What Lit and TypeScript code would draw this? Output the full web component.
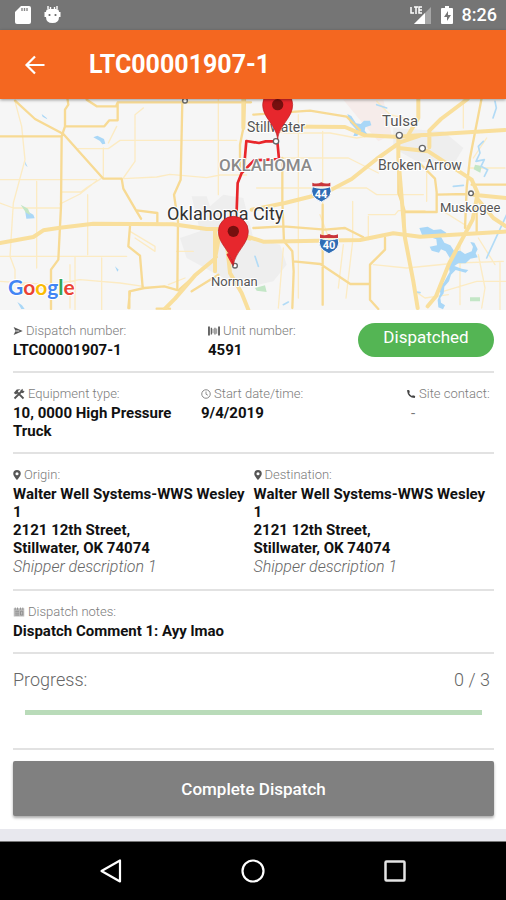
import { LitElement, html, css, svg } from "lit";
import { customElement, property } from "lit/decorators.js";

const ICONS = {
  send: svg`<path d="M1 1.500 15.500 8 1 14.500 4 8Z" fill="#555"/><path d="M4 8h6" stroke="#fff" stroke-width="1.400"/>`,
  barcode: svg`<path d="M0 2h2.600v12H0zM3.600 3.500h1.800v9H3.600zM6.200 5h1v6h-1zM8.500 3.500h1.600v9H8.500zM11.200 4.500h1v7h-1zM13.400 2H16v12h-2.600z" fill="#666"/>`,
  tools: svg`<path d="M2 14 12 4M14 14 5.500 5.500" stroke="#555" stroke-width="2.400"/><path d="M1 6.500 5 2l5-.5L6.500 4 7 6 4 8.500ZM10 3l3-2v2.500L15.500 4 13.500 7 10.500 6Z" fill="#555"/>`,
  clock: svg`<circle cx="8" cy="8" r="6.800" fill="none" stroke="#777" stroke-width="1.400"/><path d="M8 4v4.300l3 1.700" fill="none" stroke="#777" stroke-width="1.300"/>`,
  phone: svg`<path d="M1.500 2 5 1.500 6.200 5 4.800 6.500q1.600 3 4.700 4.700L11 9.800l3.700 1.300-.6 3.400Q3 14.500 1.500 2Z" fill="#444"/>`,
  pin: svg`<path fill-rule="evenodd" d="M8 0a6 6 0 0 0-6 6C2 10 8 16 8 16S14 10 14 6A6 6 0 0 0 8 0Zm0 3.500a2.500 2.500 0 1 1 0 5 2.500 2.500 0 0 1 0-5Z" fill="#555"/>`,
  notes: svg`<path d="M1 3h14v11H1Z" fill="#bbb"/><path d="M3 2v3M6 2v3M10 2v3M13 2v3M3 7h5M3 9.500h5M3 12h5M10 7v5h3V7Z" fill="none" stroke="#888" stroke-width="1.100"/>`,
};
type IconName = keyof typeof ICONS;

@customElement("detail-field")
class DetailField extends LitElement {
  @property() icon: IconName = "send";
  @property() label = "";

  static styles = css`
    :host { display: block; min-width: 0; }
    dl, dd { margin: 0; }
    dt { display: flex; align-items: center; gap: 3px; font-size: 13px; line-height: 20px; color: #7c7c7c; font-weight: 300; white-space: nowrap; }
    dd { font-size: 15px; line-height: 18px; font-weight: 700; color: #111; }
    svg { width: 10px; height: 10px; flex: none; }
    .tools, .notes, .barcode { width: 12px; height: 12px; }
    .pin { width: 8px; }
  `;

  render() {
    return html`<dl>
      <dt><svg class=${this.icon} viewBox=${this.icon === "pin" ? "2 0 12 16" : "0 0 16 16"} aria-hidden="true">${ICONS[this.icon]}</svg>${this.label}</dt>
      <dd><slot></slot></dd>
    </dl>`;
  }
}

@customElement("route-map")
class RouteMap extends LitElement {
  static styles = css`
    :host { display: block; height: 211px; background: #f6f6f6; overflow: hidden; }
    svg { display: block; width: 100%; height: 100%; font-family: Roboto, sans-serif; }
    path { fill: none; stroke-linejoin: round; stroke-linecap: round; }
    .minor { stroke: #fcebc3; stroke-width: 4; }
    .road { stroke: #f7da94; stroke-width: 7; }
    .major { stroke: #f9df9c; stroke-width: 12; }
    .urban { fill: #eeeeee; }
    .park { fill: #f6ecea; }
    .water { fill: #a9d7f7; }
    .river { stroke: #b2dbf6; stroke-width: 5; }
    .green { fill: #c3e6c6; }
    .route { stroke: #e8262a; stroke-width: 8; }
    .town { fill: #fff; stroke: #666; stroke-width: 4; }
    .label { fill: #555; stroke: #fff; stroke-width: 2; paint-order: stroke; }
    .small { font-size: 13px; }
    .medium { font-size: 14px; }
    .city { font-size: 15px; }
    .large { font-size: 18px; fill: #333; }
    .state { font-size: 17px; fill: #8a8a8a; font-weight: 500; }
    .pin { fill: #e7272d; stroke: #b71c20; stroke-width: 2; }
    .dot { fill: #76100f; }
    .shield { fill: #2f6db5; stroke: #fff; stroke-width: 3; }
    .crest { fill: #c9353a; }
    .number { font-size: 11px; font-weight: 700; fill: #fff; }
    .google { font-family: Lato, sans-serif; font-size: 21px; font-weight: 700; stroke: #fff; stroke-width: 2; paint-order: stroke; }
    .blue { fill: #4285f4; } .red { fill: #ea4335; } .yellow { fill: #fbbc05; } .leaf { fill: #34a853; }
  `;

  private pin(x: number, y: number) {
    return svg`<g transform="translate(${x} ${y})">
      <path class="pin" d="M0 0C-5-42-45-62-45-102A45 45 0 0 1 45-102C45-62 5-42 0 0Z"/>
      <circle class="dot" cx="0" cy="-102" r="17"/></g>`;
  }

  private shield(x: number, y: number) {
    return svg`<g transform="translate(${x} ${y})">
      <path class="shield" d="M-27-14Q0-4 27-14 38 16 0 32-38 16-27-14Z"/>
      <path class="crest" d="M-27-26Q-13-20 0-27 13-20 27-26V-15H-27Z"/></g>`;
  }

  render() {
    return html`<svg viewBox="0 1 506 211" preserveAspectRatio="xMidYMid slice" role="img" aria-label="Route from Stillwater to Norman">
      <g transform="scale(.333333)">
        <path class="urban" d="M575 295h45l10 30 40-35 60 10 30 120 80 20 20 60-40 50-90 20-60-30-110-60-20-60 60-20Z"/>
        <path class="park" d="M1030 5h120l25 105-40 20-60-70Z"/>
        <path class="urban" d="M1180 90l150 10 60 50-30 50-110-10-70-40Z"/>

        <path class="minor" d="M45 10l20 75 10 100-35 130-10 160 15 40 0 40 100 20M0 245l290 0M0 315l40 15 140 0M235 152h90l35-25 350 0M310 150v90M350 85l-25 50M405 130v60l-35 50M430 30l-25 20v80M370 242l100-5 40-8 110 10 40-8 80 0M183 282h60l20-15 40-25M180 318l60-30 50-40M110 250v260M263 290v180M0 475l380 0M210 500v130M225 475v160M305 480v155M0 550l150 10 90-15 120 10 70 10M655 130v160M655 0l0 130M390 400l75 45v15l-60-40M505 560l50-20M250 0h250M530 460h50"/>
        <path class="minor" d="M780 95l80 10 130 0 80 15 60-10M895 50v550M968 100v220M845 180l200 0 90 45M770 270l330 0 30 20h140M1105 355v70l30-8M1105 350h80l10-12h80M1058 310v120l-20 170M1380 440l0 180M1120 500l100 10 150-15 140-5M1435 470l20 100-10 60M1330 580l100-30 88 0M1245 580l30 20 70-10M1390 0v90M1405 210l110 0M1435 420l50 80M850 450l-15 180M1030 440l-15 130M1500 490v145"/>
        <path class="minor" d="M1130 10l40 40 60 15M1280 190v120M1460 120l-40 60M1330 340l80 50M960 350l30 80"/>

        <path class="water" d="M280 118l12-5 20 10 4 14-9 2-7-10ZM125 48l15 12 2 4-14-8ZM75 190l8 18-7-7ZM75 336l25 14 4 11-25 1ZM345 505l11 10-4 6ZM52 612l14 10 8 11-10 0Z"/>
        <path class="water" d="M1042 48l12 6 14 22 14 2 10-10 18 0 4 14-18 6-2 10 10 12-14 0-10-10-8 14-12 0 8-20-18-20ZM1258 390l25-4 18 10 22-2 16 10-2 12-14 0 10 18 18 8 12 18 18-2 14 10 20-8 4-14-8-14 12 2 10 20-6 12 6 12-22 4-14 14-22 0-12 8 22 8 20 4-8 8-30-8-14 14-6 20-14 16-2 20-10 14 2 14 12 8-6 12-14-6-2-22 8-20-4-24 14-8 18-32-4-22 6-18-14-22-14-6-6 10-22-6-6-12 22-4-2-18-18-6-22 0Z"/>
        <path class="green" d="M62 320l22 12 8 20-14-8ZM765 570l30-8 5 20-30-4ZM1410 598h30v12h-30ZM1425 200l20 4-4 20-20-10Z"/>
        <path class="river" d="M1450 130l-15 15 5 20-12 25 25-5-10 20 20 10-10 20M1485 10l4 20-10 30M1130 20l30 10M1360 265l30-3M765 475l10 30M1520 350l-60 130M850 620l15-8M1250 582l10 2"/>

        <path class="road" d="M45 8l60 55 85 45 120 134h55l5 30 38 65 15 25M260 5l30 20 58 0 5-12h400M353 15v52l-25 0-15 18H195V35l10-15-3-20M195 85l-10 30H0M185 115l-2 210-8 160-22 30 0 118M410 337l62 8v30M547 10l-5 235-20 45 12 80-2 200M390 385l-5 60 35 28 8 95M388 630v-50l45-10 60-5 42 12 115-100M735 0l-3 80-12 60v80M575 580l80-50M470 632h40M390 580l-5 50"/>
        <path class="road" d="M847 180v130l5 120 25 30 4 60-4 110M881 490l80 8 90 60h55M968 320v80l0 220M760 390l90-5 125 10 60-5 55 28M1155 420v35l-45 45v105l25 28M1195 170v115l18 50v80M1213 342h97v-60l-5-40-50-50M1310 290l90-2M1445 0l-35 180-10 90-5 120M1430 330v70M1415 260l105 0M760 50l170-12 50 8 60 10 40 40"/>
        <path class="major" d="M0 435l100-18 30-20 50-8 100-12 240 2 100 14 50 0 120 38 290-5 100-20 80 10 250-15 205-8"/>
        <path class="major" d="M755 335l100-20 120-30 80-42 75-60 70-50 60-20M755 85l280 2 60 25 90 4 330-20M1195 115v65l20 240 25 130 13 80M1195 150l90 10 130 85 18 40-15 80-70 130-40 100-25 30M1288 98l35-35 80-60M1255 0v60l-30 50M1430 300l50 60 38 25M1288 98v50M495 632l30-30 60-70 60-50 15-80 90 20M645 400v120M680 430l10 95 35 60 20 50M730 0v90M1520 300l-100-10"/>

        <path class="route" d="M832 130h-35l-20 5-38-6-6 70M832 130l5 53-75 4-37 38-12 30-4 110M684 470l16 30"/>
        <circle class="town" cx="555" cy="8" r="7"/><circle class="town" cx="1198" cy="112" r="9"/>
        <circle class="town" cx="1267" cy="151" r="9"/><circle class="town" cx="1413" cy="286" r="7"/>
        <circle class="town" cx="828" cy="130" r="8"/><circle class="town" cx="705" cy="503" r="7"/>
        ${this.shield(964, 280)}${this.shield(987, 435)}
      </g>
      <text class="label medium" x="247" y="34">Stillwater</text>
      <text class="label city" x="382" y="28">Tulsa</text>
      <text class="label medium" x="378" y="72">Broken Arrow</text>
      <text class="label small" x="440" y="114">Muskogee</text>
      <text class="label state" x="219" y="73">OKLAHOMA</text>
      <text class="label large" x="167" y="122">Oklahoma City</text>
      <text class="label small" x="211" y="188">Norman</text>
      <text class="number" text-anchor="middle" x="321" y="100">44</text>
      <text class="number" text-anchor="middle" x="329" y="151">40</text>
      <g transform="scale(.333333)">${this.pin(833, 122)}${this.pin(700, 502)}</g>
      <text class="google" x="8" y="197"><tspan class="blue">G</tspan><tspan class="red">o</tspan><tspan class="yellow">o</tspan><tspan class="blue">g</tspan><tspan class="leaf">l</tspan><tspan class="red">e</tspan></text>
    </svg>`;
  }
}

@customElement("app-root")
class AppRoot extends LitElement {
  static styles = css`
    :host { display: flex; flex-direction: column; min-height: 100vh; background: #e8e8ee; font-family: Roboto, sans-serif; color: #111; }
    * { box-sizing: border-box; }
    button { border: 0; padding: 0; background: none; font: inherit; color: inherit; cursor: pointer; }
    svg { display: block; }
    .status { display: flex; align-items: center; justify-content: space-between; height: 30px; padding: 0 9px 0 15px; background: #757575; color: #fff; font-size: 18px; font-weight: 500; }
    .group { display: flex; align-items: center; gap: 9px; }
    .left { gap: 12px; }
    .time { line-height: 30px; }
    .bar { display: flex; align-items: center; gap: 42px; height: 69px; padding: 0 23px; background: #f46720; color: #fff; position: relative; box-shadow: 0 1px 3px #0006; }
    h1 { margin: 0; font-size: 25px; line-height: 32px; font-weight: 700; }
    main { background: #fff; padding: 0 12px 13px 13px; }
    section { padding: 11px 0 12px; border-bottom: 2px solid #e2e2e2; display: grid; }
    .summary { grid-template-columns: 195px 1fr 136px; }
    .equipment { grid-template-columns: 168px 1fr 88px; column-gap: 20px; }
    .places { grid-template-columns: 1fr 1fr; }
    .badge { height: 34px; margin-top: 2px; border-radius: 17px; background: #54b554; color: #fff; font-size: 17px; line-height: 28px; text-align: center; }
    .description { display: block; font-size: 16px; line-height: 20px; font-weight: 300; font-style: italic; color: #666; }
    .none { padding-left: 5px; font-weight: 400; color: #777; }
    .progress { grid-template-columns: 1fr auto; row-gap: 19px; padding: 14px 4px 33px 0; font-size: 18px; line-height: 23px; font-weight: 300; color: #666; }
    progress { grid-column: 1 / -1; appearance: none; display: block; width: auto; height: 5px; margin: 0 8px 0 12px; border: 0; background: #b9dbb9; }
    progress::-webkit-progress-bar { background: #b9dbb9; }
    progress::-webkit-progress-value { background: #54b554; }
    .complete { display: block; width: 100%; height: 55px; margin-top: 11px; border-radius: 2px; background: #808080; color: #fff; font-size: 17px; font-weight: 500; box-shadow: 0 2px 3px #0005; }
    nav { display: grid; grid-template-columns: repeat(3, 142px); justify-content: center; height: 59px; margin-top: auto; background: #000; border-top: 1px solid #777; }
    nav button { display: grid; place-items: center; }
  `;

  render() {
    return html`
      <div class="status">
        <div class="group left">
          <svg width="17" height="20" viewBox="0 0 17 20" aria-label="SD card"><path d="M6 1h8a2 2 0 0 1 2 2v14a2 2 0 0 1-2 2H2a2 2 0 0 1-2-2V7Z" fill="#fff"/><path d="M7 3v3M9.500 3v3M12 3v3" stroke="#888" stroke-width="1.400"/></svg>
          <svg width="17" height="20" viewBox="0 0 17 20" aria-label="Debugging"><path d="M4 1v3M13 1v3M6.500 2v2M10.500 2v2" stroke="#fff" stroke-width="1.400"/><path d="M2 7Q2 4 5 4h7q3 0 3 3h1.500v5H15q0 6-6.500 6T2 12H.5V7Z" fill="#fff"/><circle cx="5.500" cy="10" r="1.100" fill="#666"/><circle cx="11.500" cy="10" r="1.100" fill="#666"/></svg>
        </div>
        <div class="group">
          <svg width="22" height="20" viewBox="0 0 22 20" aria-label="LTE signal"><path d="M21 2v17H4Z" fill="#a6a6a6"/><path d="M15 8v11H4Z" fill="#fff"/><path d="M1 2v6h3M4 2h4M6 2v7M12 2H9v6h3M9 5h3" fill="none" stroke="#fff" stroke-width="1.500"/></svg>
          <svg width="12" height="20" viewBox="0 0 12 20" aria-label="Charging"><path d="M4 1h4v2h3q1 0 1 1v14q0 1-1 1H1q-1 0-1-1V4q0-1 1-1h3Z" fill="#fff"/><path d="M7 6 3 12h3v4l4-6H7Z" fill="#757575"/></svg>
          <span class="time">8:26</span>
        </div>
      </div>
      <header class="bar">
        <button aria-label="Back"><svg width="24" height="24" viewBox="0 0 24 24"><path d="M21.500 12H4M12 3.500 3.500 12l8.500 8.500" fill="none" stroke="#fff" stroke-width="2.200"/></svg></button>
        <h1>LTC00001907-1</h1>
      </header>
      <route-map></route-map>
      <main>
        <section class="summary">
          <detail-field icon="send" label="Dispatch number:">LTC00001907-1</detail-field>
          <detail-field icon="barcode" label="Unit number:">4591</detail-field>
          <div class="badge">Dispatched</div>
        </section>
        <section class="equipment">
          <detail-field icon="tools" label="Equipment type:">10, 0000 High Pressure Truck</detail-field>
          <detail-field icon="clock" label="Start date/time:">9/4/2019</detail-field>
          <detail-field icon="phone" label="Site contact:"><span class="none">-</span></detail-field>
        </section>
        <section class="places">
          ${["Origin:", "Destination:"].map((label) => html`
            <detail-field icon="pin" .label=${label}>
              Walter Well Systems-WWS Wesley<br>1<br>2121 12th Street,<br>Stillwater, OK 74074
              <span class="description">Shipper description 1</span>
            </detail-field>`)}
        </section>
        <section>
          <detail-field icon="notes" label="Dispatch notes:">Dispatch Comment 1: Ayy lmao</detail-field>
        </section>
        <section class="progress">
          <label for="stops">Progress:</label><span>0 / 3</span>
          <progress id="stops" value="0" max="3"></progress>
        </section>
        <button class="complete">Complete Dispatch</button>
      </main>
      <nav aria-label="System">
        <button aria-label="Back"><svg width="24" height="24" viewBox="0 0 24 24"><path d="M21 1.500v21L2.500 12Z" fill="none" stroke="#fff" stroke-width="2.200" stroke-linejoin="round"/></svg></button>
        <button aria-label="Home"><svg width="24" height="24" viewBox="0 0 24 24"><circle cx="12" cy="12" r="10.500" fill="none" stroke="#fff" stroke-width="2.200"/></svg></button>
        <button aria-label="Recent apps"><svg width="24" height="24" viewBox="0 0 24 24"><rect x="2.500" y="2.500" width="19" height="19" rx="1" fill="none" stroke="#e4e4e4" stroke-width="2.500"/></svg></button>
      </nav>`;
  }
}
